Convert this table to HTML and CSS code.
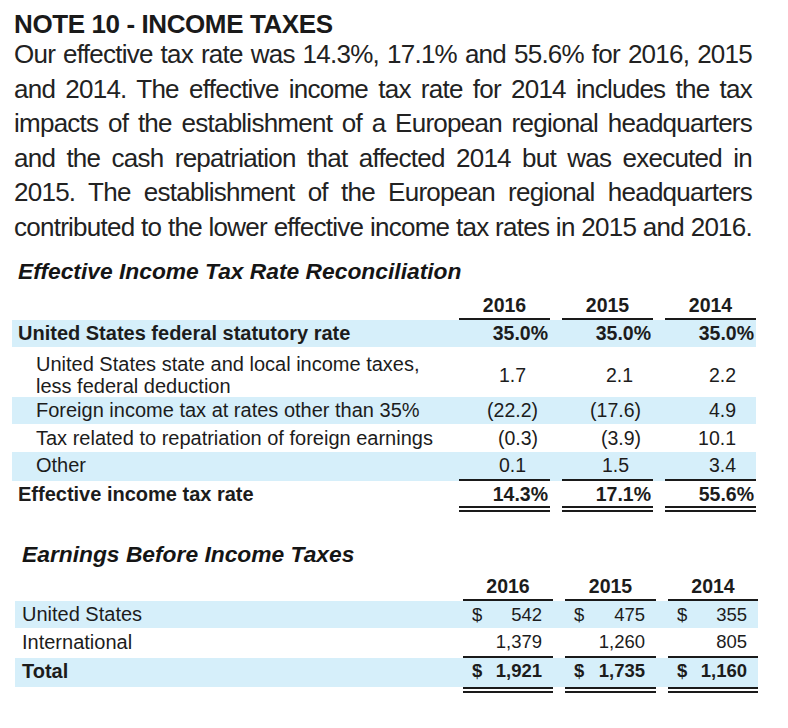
FILE: index.html
```html
<!DOCTYPE html>
<html lang="en">
<head>
<meta charset="utf-8">
<title>Note 10 - Income Taxes</title>
<link rel="stylesheet" href="styles.css">
</head>
<body>
<main class="page">
  <h1 class="note-title">NOTE 10 - INCOME TAXES</h1>
  <p class="note-text">Our effective tax rate was 14.3%, 17.1% and 55.6% for 2016, 2015<br>and 2014. The effective income tax rate for 2014 includes the tax<br>impacts of the establishment of a European regional headquarters<br>and the cash repatriation that affected 2014 but was executed in<br>2015. The establishment of the European regional headquarters<br>contributed to the lower effective income tax rates in 2015 and 2016.</p>

  <section class="recon">
    <h2 class="table-title">Effective Income Tax Rate Reconciliation</h2>
    <div class="rt">
      <div class="row head">
        <span></span><span class="yr">2016</span><span class="yr">2015</span><span class="yr">2014</span>
      </div>
      <div class="row band h27 strong">
        <span class="lbl">United States federal statutory rate</span>
        <span class="v pct">35.0%</span><span class="v pct">35.0%</span><span class="v pct">35.0%</span>
      </div>
      <div class="row two">
        <span class="lbl ind">United States state and local income taxes,<br>less federal deduction</span>
        <span class="v c1">1.7</span><span class="v c2">2.1</span><span class="v c3">2.2</span>
      </div>
      <div class="row band h27">
        <span class="lbl ind">Foreign income tax at rates other than 35%</span>
        <span class="v neg">(22.2)</span><span class="v neg">(17.6)</span><span class="v c3">4.9</span>
      </div>
      <div class="row h28">
        <span class="lbl ind">Tax related to repatriation of foreign earnings</span>
        <span class="v neg">(0.3)</span><span class="v neg">(3.9)</span><span class="v c3">10.1</span>
      </div>
      <div class="row band h27 sub">
        <span class="lbl ind">Other</span>
        <span class="v c1">0.1</span><span class="v c2b">1.5</span><span class="v c3">3.4</span>
      </div>
      <div class="row total strong">
        <span class="lbl">Effective income tax rate</span>
        <span class="v pct">14.3%</span><span class="v pct">17.1%</span><span class="v pct">55.6%</span>
      </div>
    </div>
  </section>

  <section class="earnings">
    <h2 class="table-title t2">Earnings Before Income Taxes</h2>
    <div class="et">
      <div class="row head">
        <span></span><span class="yr">2016</span><span class="yr">2015</span><span class="yr">2014</span>
      </div>
      <div class="row band h27">
        <span class="lbl">United States</span>
        <span class="m"><span>$</span><span>542</span></span>
        <span class="m"><span>$</span><span>475</span></span>
        <span class="m"><span>$</span><span>355</span></span>
      </div>
      <div class="row h28 sub">
        <span class="lbl">International</span>
        <span class="m end"><span>1,379</span></span>
        <span class="m end"><span>1,260</span></span>
        <span class="m end"><span>805</span></span>
      </div>
      <div class="row sum strong">
        <span class="lbl">Total</span>
        <span class="m"><span>$</span><span>1,921</span></span>
        <span class="m"><span>$</span><span>1,735</span></span>
        <span class="m"><span>$</span><span>1,160</span></span>
      </div>
    </div>
  </section>
</main>
</body>
</html>
```

FILE: styles.css
```css
* { box-sizing: border-box; }

html, body {
  margin: 0;
  padding: 0;
  background: #ffffff;
}

body {
  font-family: "Liberation Sans", Arial, sans-serif;
  color: #1c1c1c;
}

.page {
  width: 788px;
  padding-top: 11px;
}

.note-title {
  margin: 0 0 0 14px;
  font-size: 26px;
  line-height: 26px;
  font-weight: 700;
  letter-spacing: -0.4px;
  color: #1a1a1a;
}

.note-text {
  margin: 0 0 0 14px;
  width: 738px;
  font-size: 26px;
  line-height: 34.5px;
  letter-spacing: -0.75px;
  text-align: justify;
  text-align-last: justify;
  color: #222222;
}

.table-title {
  margin: 14px 0 0 18px;
  font-size: 22.8px;
  line-height: 26px;
  font-style: italic;
  font-weight: 700;
  color: #151515;
}

.table-title.t2 {
  margin: 29px 0 0 22px;
}

/* shared row grid */
.row {
  display: grid;
  column-gap: 12px;
}

.band { background: #d6effa; }

.strong { font-weight: 700; }

.lbl { font-size: 20px; }

.head .yr {
  font-weight: 700;
  text-align: center;
  line-height: 22px;
  padding-bottom: 2px;
  border-bottom: 2px solid #1a1a1a;
}

.v { text-align: right; }

/* ---------- reconciliation table ---------- */
.rt {
  margin: 10px 0 0 12px;
  width: 744px;
  font-size: 19.5px;
}

.rt .row { grid-template-columns: 1fr 91px 91px 91px; }

.rt .lbl { padding-left: 6px; }
.rt .lbl.ind { padding-left: 24px; }

.h27 { line-height: 27px; }
.h28 { line-height: 28px; }

.pct { padding-right: 2px; }
.neg { padding-right: 12px; }
.c1 { padding-right: 24px; }
.c2 { padding-right: 20px; }
.c2b { padding-right: 24px; }
.c3 { padding-right: 20px; }

.rt .two {
  padding-top: 6px;
  line-height: 22px;
  height: 50px;
  align-items: center;
}

.sub .v,
.sub .m {
  border-bottom: 2px solid #1a1a1a;
}

.rt .total {
  line-height: 24px;
  padding-top: 1px;
}

.rt .total .v {
  border-bottom: 6px double #1a1a1a;
}

/* ---------- earnings table ---------- */
.et {
  margin: 8px 0 0 15px;
  width: 743px;
  font-size: 19.5px;
}

.et .row { grid-template-columns: 1fr 90px 91px 90px; }

.et .lbl { padding-left: 7px; }

.m {
  display: flex;
  justify-content: space-between;
  padding: 0 11px 0 9px;
  font-size: 18.5px;
}

.m.end { justify-content: flex-end; }

.et .sum {
  line-height: 26px;
  background: linear-gradient(#d6effa, #d6effa) top left / 100% 29px no-repeat;
}

.et .sum .m {
  padding-bottom: 3px;
  border-bottom: 6px double #1a1a1a;
}
```
